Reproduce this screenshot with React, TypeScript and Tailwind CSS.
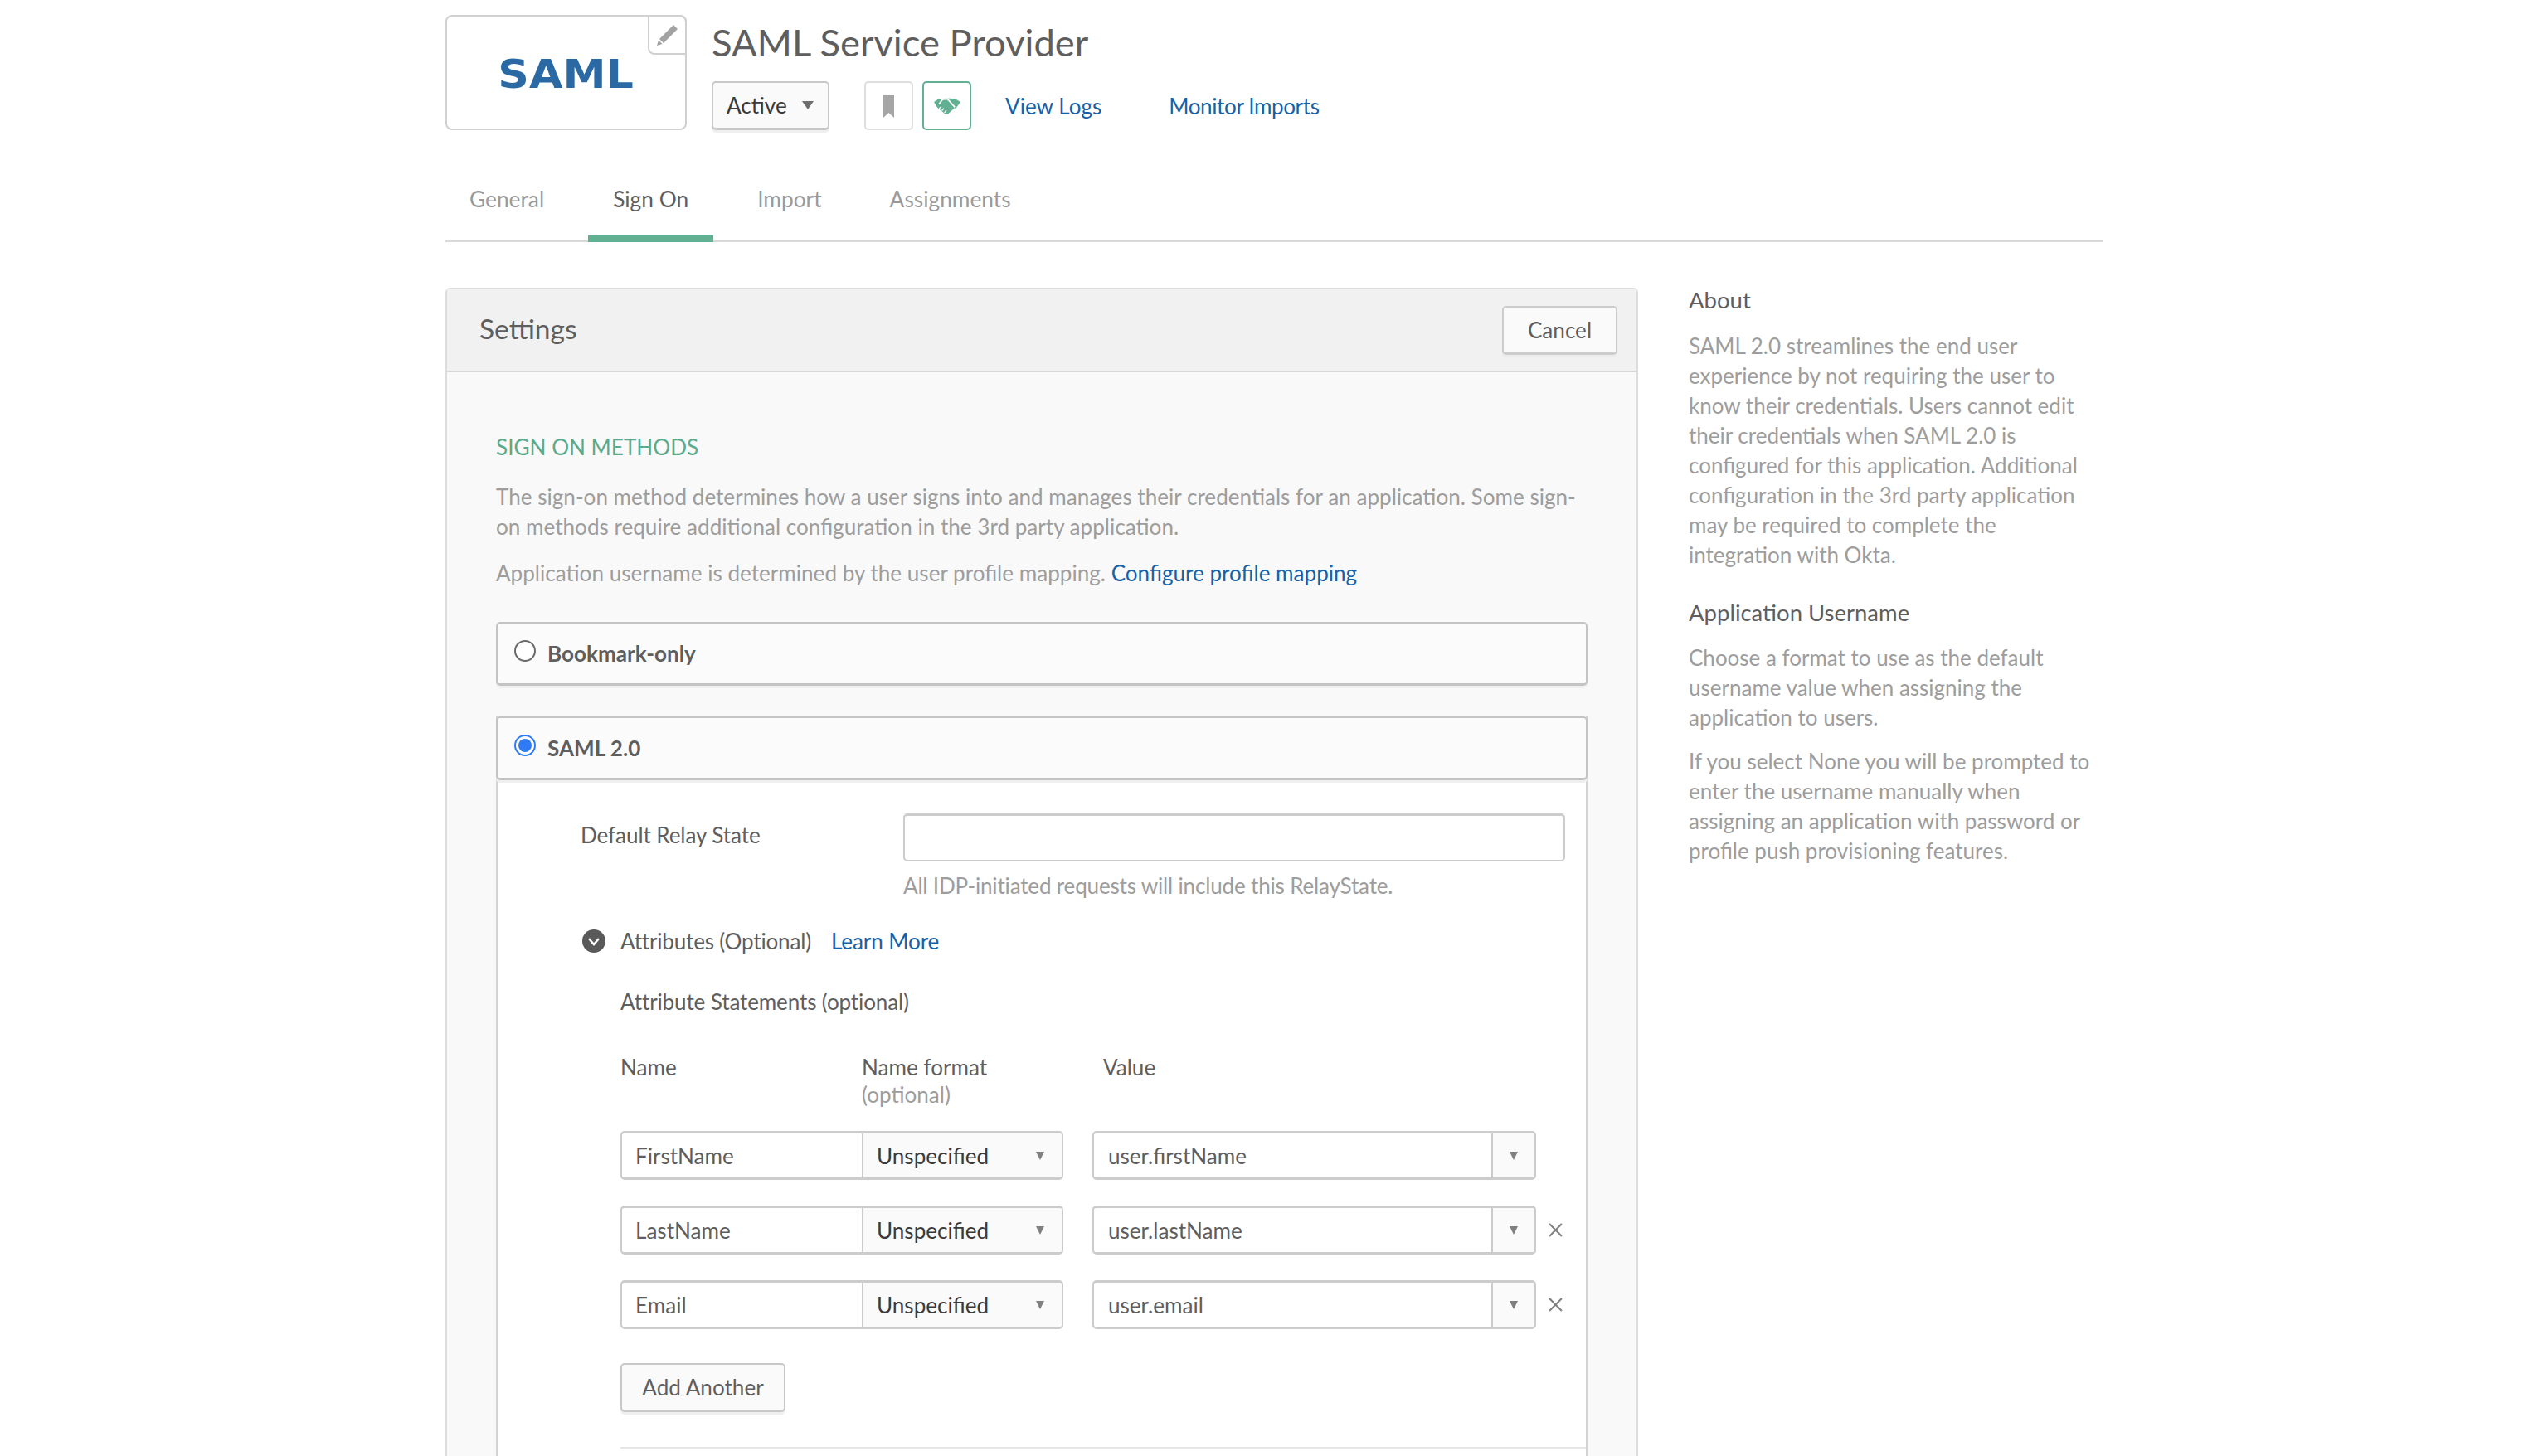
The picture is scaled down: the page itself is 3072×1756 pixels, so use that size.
import React from "react";

const link = "text-[#1662a8]";

function Caret({ className = "" }: { className?: string }) {
  return (
    <svg viewBox="0 0 12 12" className={`h-[12px] w-[12px] ${className}`}>
      <path d="M1 1h10L6 11z" fill="#808080" />
    </svg>
  );
}

function Handshake() {
  return (
    <svg viewBox="0 0 94 58" className="h-[20px] w-[32px]">
      <path d="M0 14L16 4l14 3 9-5h21l18 3 16 9-16 22h-6L50 57H40L22 42 12 34z" fill="#62b092" />
      <path d="M18 22L31 5l17-1 26 29" fill="none" stroke="#fff" strokeWidth="5" />
      <path d="M26 30l-7 8M35 37l-7 8M44 44l-7 8" fill="none" stroke="#fff" strokeWidth="4" />
    </svg>
  );
}

function AttributeRow({ name, value, removable }: { name: string; value: string; removable?: boolean }) {
  return (
    <div className="flex h-[59px] items-stretch">
      <div className="flex w-[534px] rounded-[5px] border-2 border-t-[3px] border-b-[3px] border-[#cccccc] bg-white">
        <div className="flex w-[289px] items-center pl-[16px] text-[#5e5e5e]">{name}</div>
        <div className="flex flex-1 items-center justify-between rounded-r-[3px] border-l-2 border-[#cccccc] bg-[#fafafa] pl-[16px] pr-[20px] text-[#3a3a3a]">
          <span>Unspecified</span>
          <Caret />
        </div>
      </div>
      <div className="ml-[35px] flex w-[535px] rounded-[5px] border-2 border-t-[3px] border-b-[3px] border-[#cccccc] bg-white">
        <div className="flex flex-1 items-center pl-[17px] text-[#5e5e5e]">{value}</div>
        <div className="flex w-[52px] items-center justify-center rounded-r-[3px] border-l-2 border-[#cccccc] bg-[#fafafa]">
          <Caret />
        </div>
      </div>
      {removable && (
        <svg viewBox="0 0 16 16" className="ml-[15px] mt-[21px] h-[17px] w-[17px]">
          <path d="M1 1l14 14M15 1L1 15" stroke="#808080" strokeWidth="2" />
        </svg>
      )}
    </div>
  );
}

export default function App() {
  return (
    <div className="h-[1756px] overflow-hidden bg-white font-['Lato',sans-serif] text-[26.1px] leading-[36px] text-[#5e5e5e]">
      <div className="ml-[537px] w-[1999px] pt-[18px]">
        {/* Header */}
        <div className="flex h-[139px]">
          <div className="relative flex h-[139px] w-[291px] items-center justify-center rounded-[8px] border-2 border-[#d0d0d0]">
            <span className="mt-[2px] scale-x-[1.09] font-['DejaVu_Sans',sans-serif] text-[48px] font-bold leading-none text-[#2a69a4]">SAML</span>
            <div className="absolute -right-[2px] -top-[2px] flex h-[48px] w-[47px] items-center justify-center rounded-bl-[8px] rounded-tr-[8px] border-2 border-[#d0d0d0]">
              <svg viewBox="0 0 26 26" className="h-[26px] w-[26px]">
                <path d="M20 1l5 5L8 23l-5-5zM2 19.500L6.500 24 0 26z" fill="#a3a3a3" />
              </svg>
            </div>
          </div>
          <div className="ml-[30px]">
            <h1 className="pt-[7px] text-[45.4px] font-normal leading-[52px] text-[#5e5e5e]">SAML Service Provider</h1>
            <div className="mt-[21px] flex h-[59px] items-center">
              <div className="flex h-[59px] w-[142px] items-center justify-between rounded-[5px] border-2 border-b-[3px] border-[#c8c8c8] bg-[#fafafa] pl-[16px] pr-[16px] text-[#3a3a3a] shadow-[0_3px_0_#efefef]">
                <span>Active</span>
                <svg viewBox="0 0 16 12" className="h-[12px] w-[16px]">
                  <path d="M1 1h14L8 11z" fill="#6e6e6e" />
                </svg>
              </div>
              <div className="ml-[42px] flex h-[59px] w-[59px] items-center justify-center rounded-[5px] border-2 border-[#dedede]">
                <svg viewBox="0 0 13 28" className="h-[30px] w-[13px]">
                  <path d="M0 0h13v28l-6.500-6L0 28z" fill="#a6a6a6" />
                </svg>
              </div>
              <div className="ml-[11px] flex h-[59px] w-[59px] items-center justify-center rounded-[5px] border-2 border-[#62b092]">
                <Handshake />
              </div>
              <a className={`ml-[41px] ${link}`}>View Logs</a>
              <a className={`ml-[81px] tracking-[-0.4px] ${link}`}>Monitor Imports</a>
            </div>
          </div>
        </div>

        {/* Tabs */}
        <div className="mt-[60px] flex h-[75px] gap-[24px] border-b-2 border-[#d9d9d9] text-[26.3px]">
          <div className="px-[29px] pt-[5px] text-[#9a9a9a]">General</div>
          <div className="-mb-[2px] border-b-[8px] border-[#62b092] px-[30px] pt-[5px] text-[#5e5e5e]">Sign On</div>
          <div className="px-[29px] pt-[5px] text-[#9a9a9a]">Import</div>
          <div className="px-[29px] pt-[5px] text-[#9a9a9a]">Assignments</div>
        </div>

        <div className="mt-[55px] flex">
          {/* Settings panel */}
          <div className="w-[1438px] shrink-0 rounded-t-[6px] border-2 border-b-0 border-[#dcdcdc] bg-[#f9f9f9]">
            <div className="flex h-[100px] items-center justify-between border-b-2 border-[#d9d9d9] bg-[#f1f1f1] pl-[39px] pr-[23px]">
              <h2 className="-mt-[4px] text-[33.500px] font-normal text-[#5e5e5e]">Settings</h2>
              <div className="flex h-[59px] w-[139px] items-center justify-center rounded-[5px] border-2 border-b-[3px] border-[#cccccc] bg-[#fafafa] shadow-[0_3px_0_#ececec]">Cancel</div>
            </div>
            <div className="px-[59px] pb-[100px] pt-[72px]">
              <h3 className="font-normal uppercase text-[#5aaa8c]">Sign On Methods</h3>
              <p className="mt-[24px] text-[#9d9d9d]">
                The sign-on method determines how a user signs into and manages their credentials for an application. Some sign-
                <br />
                on methods require additional configuration in the 3rd party application.
              </p>
              <p className="mt-[20px] text-[#9d9d9d]">
                Application username is determined by the user profile mapping. <a className={link}>Configure profile mapping</a>
              </p>

              <div className="mt-[41px] flex h-[77px] items-center rounded-[5px] border-2 border-b-[3px] border-[#c4c4c4] bg-[#fbfbfb] pl-[20px] shadow-[0_3px_0_#efefef]">
                <span className="-mt-[6px] h-[26px] w-[26px] rounded-full border-2 border-[#6a6a6a] bg-white" />
                <span className="ml-[14px] font-bold text-[#5e5e5e]">Bookmark-only</span>
              </div>

              {/* SAML 2.0 */}
              <div className="mt-[37px] border-x-2 border-[#d4d4d4] bg-white">
                <div className="-mx-[2px] flex h-[77px] items-center rounded-[5px] border-2 border-b-[3px] border-[#c4c4c4] bg-[#fbfbfb] pl-[20px] shadow-[0_3px_0_#efefef]">
                  <span className="-mt-[6px] flex h-[26px] w-[26px] items-center justify-center rounded-full border-2 border-[#2f7bf5] bg-white">
                    <span className="h-[16px] w-[16px] rounded-full bg-[#2f7bf5]" />
                  </span>
                  <span className="ml-[14px] font-bold text-[#5e5e5e]">SAML 2.0</span>
                </div>
                <div className="pb-[60px] pr-[24px] pt-[40px]">
                  <div className="flex">
                    <div className="ml-[100px] w-[389px] pt-[8px] tracking-[-0.1px]">Default Relay State</div>
                    <div className="h-[58px] w-[798px] rounded-[5px] border-2 border-t-[3px] border-[#cccccc] bg-white" />
                  </div>
                  <p className="ml-[489px] mt-[11px] tracking-[-0.2px] text-[#9d9d9d]">All IDP-initiated requests will include this RelayState.</p>
                  <div className="ml-[102px] mt-[31px] flex h-[36px] items-center">
                    <svg viewBox="0 0 28 28" className="h-[28px] w-[28px]">
                      <circle cx="14" cy="14" r="14" fill="#5a5a5a" />
                      <path d="M8 11l6 7 6-7" fill="none" stroke="#fff" strokeWidth="2.500" />
                    </svg>
                    <span className="ml-[18px] tracking-[-0.2px]">Attributes (Optional)</span>
                    <a className={`ml-[24px] tracking-[-0.1px] ${link}`}>Learn More</a>
                  </div>
                  <div className="ml-[148px] mt-[37px] tracking-[-0.15px]">Attribute Statements (optional)</div>
                  <div className="ml-[148px] mt-[43px] flex">
                    <div className="w-[291px]">Name</div>
                    <div className="w-[291px]">
                      Name format
                      <div className="-mt-[3px] text-[#9d9d9d]">(optional)</div>
                    </div>
                    <div>Value</div>
                  </div>
                  <div className="ml-[148px] mt-[26px] flex flex-col gap-[31px]">
                    <AttributeRow name="FirstName" value="user.firstName" />
                    <AttributeRow name="LastName" value="user.lastName" removable />
                    <AttributeRow name="Email" value="user.email" removable />
                  </div>
                  <div className="ml-[148px] mt-[41px] flex h-[59px] w-[199px] items-center justify-center rounded-[5px] border-2 border-b-[3px] border-[#c8c8c8] bg-[#fafafa] shadow-[0_3px_0_#efefef]">Add Another</div>
                  <div className="-mr-[24px] ml-[148px] mt-[42px] border-t-2 border-[#e6e6e6]" />
                </div>
              </div>
            </div>
          </div>

          {/* Sidebar */}
          <aside className="-mt-[3px] ml-[61px] w-[500px] text-[26px]">
            <h4 className="text-[27.5px] font-normal text-[#5e5e5e]">About</h4>
            <p className="mt-[19px] text-[#9d9d9d]">
              SAML 2.0 streamlines the end user experience by not requiring the user to know their credentials. Users cannot edit their credentials when SAML 2.0 is configured for this application. Additional configuration in the 3rd party application may be required to complete the integration with Okta.
            </p>
            <h4 className="mt-[34px] text-[27.5px] font-normal text-[#5e5e5e]">Application Username</h4>
            <p className="mt-[18px] text-[#9d9d9d]">
              Choose a format to use as the default username value when assigning the application to users.
            </p>
            <p className="mt-[17px] text-[#9d9d9d]">
              If you select None you will be prompted to enter the username manually when assigning an application with password or profile push provisioning features.
            </p>
          </aside>
        </div>
      </div>
    </div>
  );
}
